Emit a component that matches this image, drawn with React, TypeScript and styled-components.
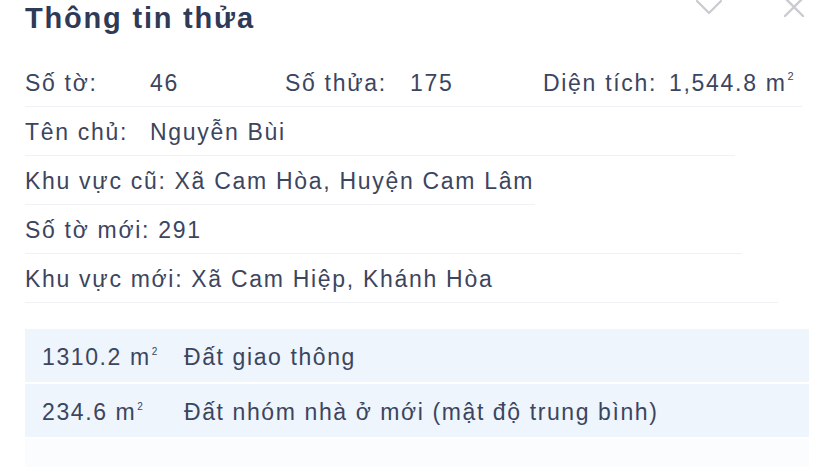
import styled, { createGlobalStyle } from 'styled-components'

const GlobalStyle = createGlobalStyle`
  html, body {
    margin: 0;
    padding: 0;
    background: #ffffff;
    overflow: hidden;
  }
  body {
    font-family: "Liberation Sans", Arial, sans-serif;
    color: #3c4560;
  }
`

interface InfoRow {
  lineWidth: number
  cells: { text: string; width?: number; sup?: boolean }[]
}

const infoRows: InfoRow[] = [
  {
    lineWidth: 777,
    cells: [
      { text: 'Số tờ:', width: 125 },
      { text: '46', width: 135 },
      { text: 'Số thửa:', width: 125 },
      { text: '175', width: 133 },
      { text: 'Diện tích:', width: 126 },
      { text: '1,544.8 m', sup: true },
    ],
  },
  { lineWidth: 710, cells: [{ text: 'Tên chủ:', width: 125 }, { text: 'Nguyễn Bùi' }] },
  { lineWidth: 510, cells: [{ text: 'Khu vực cũ: Xã Cam Hòa, Huyện Cam Lâm' }] },
  { lineWidth: 717, cells: [{ text: 'Số tờ mới: 291' }] },
  { lineWidth: 753, cells: [{ text: 'Khu vực mới: Xã Cam Hiệp, Khánh Hòa' }] },
]

const landUse = [
  { area: '1310.2', type: 'Đất giao thông' },
  { area: '234.6', type: 'Đất nhóm nhà ở mới (mật độ trung bình)' },
]

function App() {
  return (
    <>
      <GlobalStyle />
      <Panel>
        <Header>
          <Title>Thông tin thửa</Title>
          <Actions>
            <IconButton aria-label="collapse">
              <svg width="28" height="18" viewBox="0 0 28 18" fill="none">
                <path d="M2 3 L14 15 L26 3" stroke="#c9cbd1" strokeWidth="2.2" strokeLinecap="round" strokeLinejoin="round" />
              </svg>
            </IconButton>
            <IconButton aria-label="close">
              <svg width="22" height="22" viewBox="0 0 22 22" fill="none">
                <path d="M2 0 L20 18 M20 0 L2 18" stroke="#c9cbd1" strokeWidth="2.4" strokeLinecap="round" />
              </svg>
            </IconButton>
          </Actions>
        </Header>

        <InfoList>
          {infoRows.map((row, i) => (
            <Row key={i} style={{ width: row.lineWidth }}>
              {row.cells.map((c, j) => (
                <Cell key={j} $width={c.width}>
                  {c.text}
                  {c.sup && <Sup>2</Sup>}
                </Cell>
              ))}
            </Row>
          ))}
        </InfoList>

        <UseTable>
          {landUse.map((u, i) => (
            <UseRow key={i}>
              <Area>
                {u.area} m<SmallSup>2</SmallSup>
              </Area>
              <UseType>{u.type}</UseType>
            </UseRow>
          ))}
          <EmptyRow />
        </UseTable>
      </Panel>
    </>
  )
}

const Panel = styled.div`
  width: 835px;
  height: 467px;
  padding: 0 25px;
  box-sizing: border-box;
  overflow: hidden;
`

const Header = styled.div`
  display: flex;
  align-items: flex-start;
  justify-content: space-between;
  height: 58px;
  margin-top: -1px;
`

const Title = styled.h1`
  margin: 0;
  font-size: 29px;
  line-height: 38px;
  font-weight: 700;
  letter-spacing: 1.8px;
  color: #2f3a56;
`

const Actions = styled.div`
  display: flex;
  align-items: flex-start;
  gap: 60px;
  margin-top: -1px;
  margin-right: 5px;
`

const IconButton = styled.button`
  display: flex;
  padding: 0;
  border: none;
  background: none;
  cursor: pointer;
`

const InfoList = styled.div`
  display: flex;
  flex-direction: column;
`

const Row = styled.div`
  display: flex;
  align-items: center;
  box-sizing: border-box;
  height: 49px;
  padding-top: 4px;
  border-bottom: 1.5px solid #eff1f4;
  font-size: 23px;
  letter-spacing: 1.7px;
  &:first-child {
    height: 49.5px;
  }
`

const Cell = styled.span<{ $width?: number }>`
  flex: 0 0 ${(p) => (p.$width ? `${p.$width}px` : 'auto')};
  white-space: nowrap;
`

const Sup = styled.sup`
  font-size: 11px;
  vertical-align: 11px;
  margin-left: 1px;
`

const UseTable = styled.div`
  display: flex;
  flex-direction: column;
  gap: 2px;
  width: 784px;
  margin-top: 26px;
`

const UseRow = styled.div`
  display: flex;
  align-items: center;
  box-sizing: border-box;
  height: 53px;
  padding: 4px 0 0 17px;
  background: #eef5fc;
  font-size: 23px;
  letter-spacing: 1.6px;
`

const EmptyRow = styled.div`
  height: 60px;
  background: #fbfcfe;
`

const Area = styled.span`
  flex: 0 0 142px;
  white-space: nowrap;
`

const SmallSup = styled.sup`
  font-size: 10px;
  vertical-align: 10px;
  margin-left: 1px;
`

const UseType = styled.span`
  white-space: nowrap;
`

export default App
